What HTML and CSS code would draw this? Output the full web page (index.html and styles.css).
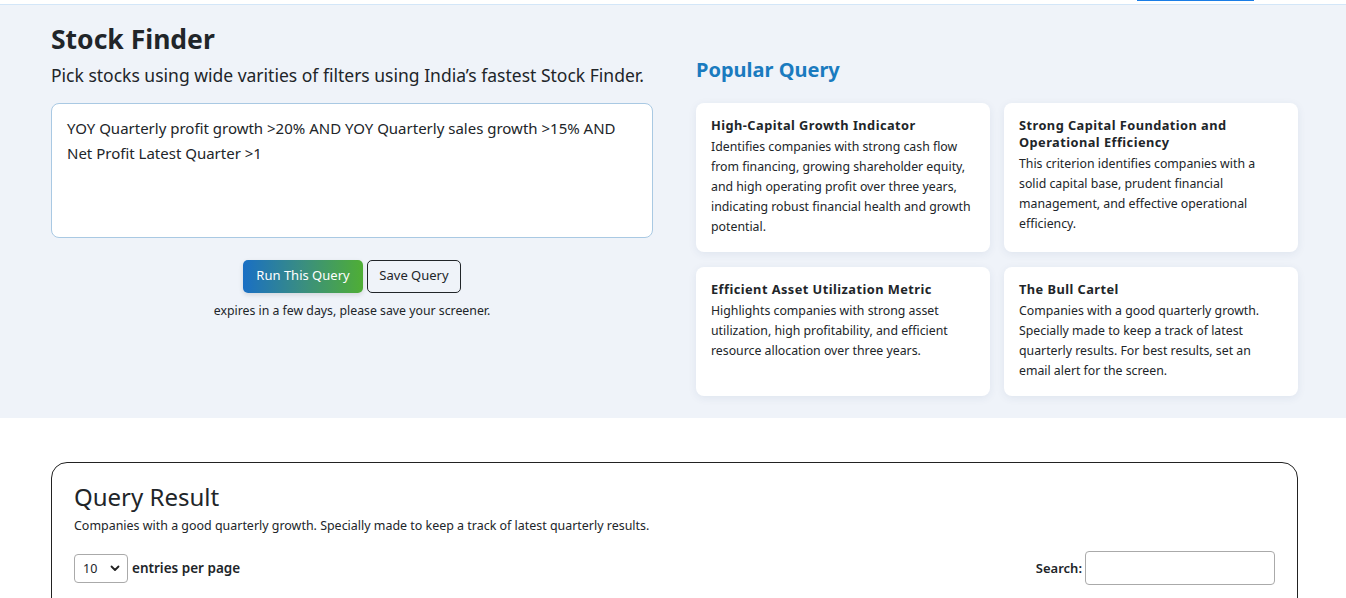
FILE: index.html
```html
<!DOCTYPE html>
<html lang="en">
<head>
<meta charset="utf-8">
<title>Stock Finder</title>
<link rel="stylesheet" href="styles.css">
</head>
<body>
<header class="topbar">
  <div class="topbar-inner"><span class="nav-accent"></span></div>
</header>
<section class="hero">
  <div class="container hero-grid">
    <div class="finder">
      <h1 class="title">Stock Finder</h1>
      <p class="subtitle">Pick stocks using wide varities of filters using India’s fastest Stock Finder.</p>
      <div class="query-box">YOY Quarterly profit growth &gt;20% AND YOY Quarterly sales growth &gt;15% AND Net Profit Latest Quarter &gt;1</div>
      <div class="actions">
        <div class="btn-row">
          <button class="btn btn-run">Run This Query</button>
          <button class="btn btn-save">Save Query</button>
        </div>
        <p class="note">expires in a few days, please save your screener.</p>
      </div>
    </div>
    <div class="popular">
      <h2 class="popular-title">Popular Query</h2>
      <div class="cards">
        <div class="card">
          <h3 class="card-title">High-Capital Growth Indicator</h3>
          <p class="card-text">Identifies companies with strong cash flow from financing, growing shareholder equity, and high operating profit over three years, indicating robust financial health and growth potential.</p>
        </div>
        <div class="card">
          <h3 class="card-title">Strong Capital Foundation and Operational Efficiency</h3>
          <p class="card-text">This criterion identifies companies with a solid capital base, prudent financial management, and effective operational efficiency.</p>
        </div>
        <div class="card">
          <h3 class="card-title">Efficient Asset Utilization Metric</h3>
          <p class="card-text">Highlights companies with strong asset utilization, high profitability, and efficient resource allocation over three years.</p>
        </div>
        <div class="card">
          <h3 class="card-title">The Bull Cartel</h3>
          <p class="card-text">Companies with a good quarterly growth. Specially made to keep a track of latest quarterly results. For best results, set an email alert for the screen.</p>
        </div>
      </div>
    </div>
  </div>
</section>
<section class="results">
  <div class="container">
    <div class="result-card">
      <h2 class="result-title">Query Result</h2>
      <p class="result-desc">Companies with a good quarterly growth. Specially made to keep a track of latest quarterly results.</p>
      <div class="table-controls">
        <label class="entries">
          <span class="select">10
            <svg class="chev" width="10" height="7" viewBox="0 0 10 7"><path d="M1.5 1.5 L5 5 L8.5 1.5" fill="none" stroke="#222" stroke-width="1.8" stroke-linecap="round" stroke-linejoin="round"/></svg>
          </span>
          entries per page
        </label>
        <label class="search">Search: <span class="search-input"></span></label>
      </div>
    </div>
  </div>
</section>
</body>
</html>
```

FILE: styles.css
```css
* { box-sizing: border-box; }
html, body { margin: 0; padding: 0; }
body {
  font-family: "Noto Sans", "Open Sans", "Liberation Sans", sans-serif;
  color: #212529;
  background: #fff;
  width: 1346px;
  overflow: hidden;
}
.topbar {
  height: 5px;
  background: #fff;
  border-bottom: 1px solid #d3e6f8;
}
.topbar-inner {
  position: relative;
  height: 4px;
}
.nav-accent {
  position: absolute;
  left: 1137px;
  top: 0;
  width: 117px;
  height: 1px;
  background: #1a7de6;
}
.container {
  width: 1247px;
  margin-left: 51px;
}
.hero {
  background: #eff3f9;
  height: 413px;
}
.hero-grid {
  display: grid;
  grid-template-columns: 602px 602px;
  column-gap: 43px;
}
.title {
  margin: 0;
  padding-top: 17px;
  font-size: 26.5px;
  line-height: 34px;
  font-weight: 700;
  color: #212529;
}
.subtitle {
  margin: 6px 0 0;
  font-size: 17.5px;
  line-height: 26px;
  color: #212529;
}
.query-box {
  margin-top: 15px;
  height: 135px;
  background: #fff;
  border: 1px solid #a9c9e3;
  border-radius: 8px;
  padding: 12px 15px;
  font-size: 15px;
  line-height: 25px;
  color: #212529;
}
.actions {
  display: flex;
  flex-direction: column;
  align-items: center;
  margin-top: 22px;
}
.btn-row {
  display: flex;
  gap: 4px;
}
.btn {
  font-family: inherit;
  font-size: 13px;
  height: 33px;
  border-radius: 5px;
  padding: 0 0 4px;
  white-space: nowrap;
  cursor: pointer;
}
.btn-run {
  width: 120px;
  color: #fff;
  border: none;
  background: linear-gradient(90deg, #1a6fc4 0%, #3a8e80 50%, #4fae35 100%);
  box-shadow: 0 2px 5px rgba(0,0,0,0.12);
}
.btn-save {
  width: 94px;
  color: #212529;
  background: transparent;
  border: 1px solid #212529;
}
.note {
  margin: 9px 0 0;
  font-size: 12.3px;
  line-height: 18px;
  color: #212529;
}
.popular-title {
  margin: 0;
  padding-top: 51px;
  font-size: 20px;
  line-height: 28px;
  font-weight: 700;
  color: #1a7bbf;
}
.cards {
  margin-top: 19px;
  display: grid;
  grid-template-columns: 294px 294px;
  column-gap: 14px;
  row-gap: 15px;
  align-items: stretch;
}
.card {
  background: #fff;
  border-radius: 8px;
  padding: 14px 15px 16px;
  box-shadow: 0 2px 8px rgba(40, 60, 110, 0.08);
}
.card:nth-child(1), .card:nth-child(2) { height: 149px; }
.card:nth-child(3), .card:nth-child(4) { height: 129px; }
.card-title {
  margin: 0;
  font-size: 12.8px;
  line-height: 17px;
  font-weight: 700;
  letter-spacing: 0.45px;
  color: #212529;
}
.card-text {
  margin: 3px 0 0;
  font-size: 12.3px;
  line-height: 20px;
  color: #212529;
}
.results {
  padding-top: 44px;
}
.result-card {
  border: 1px solid #222;
  border-radius: 16px;
  padding: 18px 22px 40px;
}
.result-title {
  margin: 0;
  font-size: 24px;
  line-height: 32px;
  font-weight: 400;
  color: #212529;
}
.result-desc {
  margin: 5px 0 0;
  font-size: 12.45px;
  line-height: 16px;
  color: #212529;
}
.table-controls {
  margin-top: 17px;
  display: flex;
  justify-content: space-between;
  align-items: center;
}
.entries {
  display: flex;
  align-items: center;
  gap: 4px;
  font-size: 13.5px;
  font-weight: 600;
  color: #212529;
}
.select {
  display: flex;
  align-items: center;
  justify-content: space-between;
  width: 54px;
  height: 29px;
  border: 1px solid #aaa;
  border-radius: 4px;
  padding: 0 7px 0 8px;
  font-size: 12.5px;
  font-weight: 400;
  background: #fff;
}
.search {
  display: flex;
  align-items: center;
  gap: 3px;
  font-size: 13px;
  font-weight: 600;
  color: #212529;
}
.search-input {
  display: block;
  width: 190px;
  height: 34px;
  border: 1px solid #aaa;
  border-radius: 4px;
  background: #fff;
}
```
